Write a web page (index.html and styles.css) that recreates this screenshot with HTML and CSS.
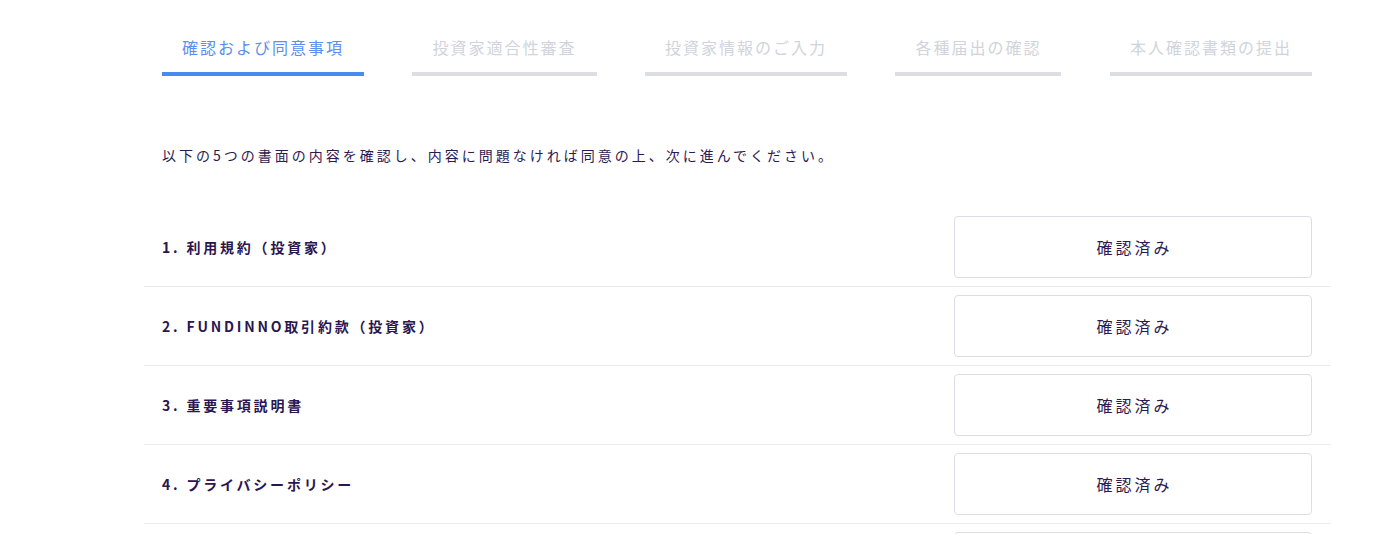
FILE: index.html
```html
<!DOCTYPE html>
<html lang="ja">
<head>
<meta charset="utf-8">
<title>確認および同意事項</title>
<link rel="stylesheet" href="styles.css">
</head>
<body>
<main class="page">
  <nav class="steps">
    <div class="step active">確認および同意事項</div>
    <div class="step">投資家適合性審査</div>
    <div class="step">投資家情報のご入力</div>
    <div class="step">各種届出の確認</div>
    <div class="step">本人確認書類の提出</div>
  </nav>
  <p class="intro">以下の5つの書面の内容を確認し、内容に問題なければ同意の上、次に進んでください。</p>
  <ul class="docs">
    <li class="doc"><span class="doc-title">1. 利用規約（投資家）</span><button class="doc-btn">確認済み</button></li>
    <li class="doc"><span class="doc-title">2. FUNDINNO取引約款（投資家）</span><button class="doc-btn">確認済み</button></li>
    <li class="doc"><span class="doc-title">3. 重要事項説明書</span><button class="doc-btn">確認済み</button></li>
    <li class="doc"><span class="doc-title">4. プライバシーポリシー</span><button class="doc-btn">確認済み</button></li>
    <li class="doc"><span class="doc-title">5. 反社会的勢力の排除に関する確約</span><button class="doc-btn">確認済み</button></li>
  </ul>
</main>
</body>
</html>
```

FILE: styles.css
```css
* { box-sizing: border-box; }
html, body {
  margin: 0;
  padding: 0;
  background: #ffffff;
}
body {
  font-family: "Noto Sans CJK JP", "Noto Sans", sans-serif;
  color: #2c1a52;
  overflow: hidden;
}
.page {
  margin-left: 144px;
  width: 1187px;
  padding-top: 35px;
}
.steps {
  display: flex;
  justify-content: space-between;
  padding: 0 19px 0 18px;
}
.step {
  padding: 0 20px 13px 20px;
  font-size: 16px;
  line-height: 24px;
  letter-spacing: 2px;
  color: #d0d4dc;
  border-bottom: 4px solid #dcdee3;
  white-space: nowrap;
}
.step.active {
  color: #5a8fee;
  border-bottom-color: #468cf0;
}
.intro {
  margin: 68px 0 0 0;
  padding: 0 18px;
  font-size: 14px;
  line-height: 22px;
  letter-spacing: 3px;
  color: #2c1a52;
}
.docs {
  list-style: none;
  margin: 42px 0 0 0;
  padding: 0;
}
.doc {
  display: flex;
  align-items: center;
  justify-content: space-between;
  padding: 8px 19px 8px 18px;
  border-bottom: 1px solid #ececef;
}
.doc-title {
  font-size: 14px;
  font-weight: 700;
  letter-spacing: 2.8px;
  color: #2a1650;
}
.doc-btn {
  width: 358px;
  height: 62px;
  background: #ffffff;
  border: 1px solid #dedce7;
  border-radius: 4px;
  font-family: inherit;
  font-size: 16px;
  letter-spacing: 3px;
  text-indent: 3px;
  color: #2c1a52;
  padding: 0;
}
```
